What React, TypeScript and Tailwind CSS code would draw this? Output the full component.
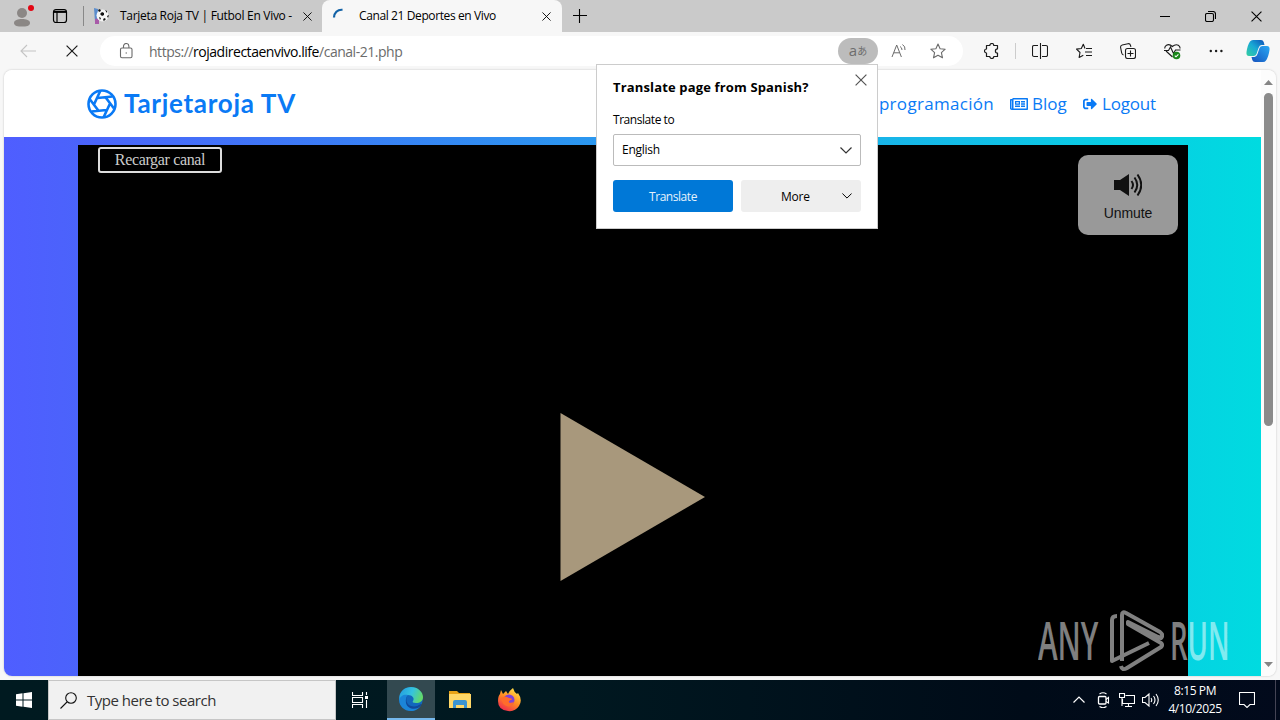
import React from "react";
import { FaSignOutAlt, FaRegNewspaper } from "react-icons/fa";

type IconProps = { className?: string; children: React.ReactNode; box?: string };

function Icon({ className = "", children, box = "0 0 16 16" }: IconProps) {
  return (
    <svg viewBox={box} className={`block shrink-0 ${className}`} fill="none" stroke="currentColor" strokeWidth="1.1">
      {children}
    </svg>
  );
}

function Cross({ className = "" }: { className?: string }) {
  return (
    <Icon className={className} box="0 0 10 10">
      <path d="M.5.5l9 9M9.5.5l-9 9" strokeWidth="1" />
    </Icon>
  );
}

function TabStrip() {
  return (
    <header className="flex h-8 shrink-0 items-center bg-[#cacaca] text-black">
      <Icon className="ml-[13px] h-[26px] w-[22px] text-[#8b8785]" box="0 0 22 26">
        <g fill="currentColor" stroke="none">
          <circle cx="9" cy="10" r="5" />
          <path d="M1 20c0-3 4-4 8-4s8 1 8 4-4 3.500-8 3.500-8-.5-8-3.500z" />
          <circle cx="18" cy="5" r="3" fill="#e30613" />
        </g>
      </Icon>
      <Icon className="ml-[17px] h-4 w-4" box="0 0 16 16">
        <rect x="1.500" y="1.500" width="13" height="13" rx="2.500" strokeWidth="1.200" />
        <path d="M2 3.800h12" strokeWidth="2.200" />
        <path d="M5 4v10" strokeWidth="1.200" />
      </Icon>
      <div className="ml-[15px] h-5 w-px bg-[#888]" />
      <div className="flex h-full w-[238px] items-center">
        <Icon className="ml-[10px] h-4 w-4" box="0 0 16 16">
          <g stroke="none">
            <path d="M0 0l4 1v14l-3-1z" fill="#5a8ccc" />
            <path d="M1 11l4-1v6H1z" fill="#a85aa8" />
            <circle cx="8.500" cy="7.500" r="6" fill="#f6f6f6" />
            <path d="M4 2l2-1 1 2-2 1zM8 4l2 1v2L8 8 6 6zM11 2l2 1v2zM13 8l2-1-1 3zM5 9l2 1-1 2zM10 10l2 1-2 2-1-1z" fill="#111" />
          </g>
        </Icon>
        <span className="ml-[10px] w-[180px] whitespace-nowrap text-[12px] tracking-[-0.3px]">
          Tarjeta Roja TV | Futbol En Vivo -
        </span>
        <Cross className="ml-[3px] h-[9px] w-[9px]" />
      </div>
      <div className="flex h-full w-60 items-center rounded-t-lg bg-[#f7f7f7]">
        <Icon className="ml-[9px] h-4 w-4 text-[#1262a6]" box="0 0 16 16">
          <path d="M3 9.500C3 5 6.500 1.300 11.500 1.800" strokeWidth="2.200" />
        </Icon>
        <span className="ml-[12px] w-[180px] whitespace-nowrap text-[12px] tracking-[-0.39px]">Canal 21 Deportes en Vivo</span>
        <Cross className="ml-[3px] h-[9px] w-[9px]" />
      </div>
      <Icon className="ml-[11px] h-[14px] w-[14px]" box="0 0 14 14">
        <path d="M6.500 0v14M0 6.500h14" />
      </Icon>
      <div className="ml-auto mr-[18px] flex items-center gap-[35px]">
        <div className="h-px w-[10px] bg-black" />
        <Icon className="h-[11px] w-[11px]" box="0 0 11 11">
          <rect x=".5" y="2.500" width="8" height="8" rx="1.500" />
          <path d="M3 .5h5q2.500 0 2.500 2.500v5" />
        </Icon>
        <Cross className="h-[11px] w-[11px]" />
      </div>
    </header>
  );
}

function Toolbar() {
  return (
    <div className="flex h-[38px] shrink-0 items-center bg-[#f7f7f7] text-[#1b1b1b]">
      <Icon className="ml-5 h-4 w-4 text-[#c4c4c4]">
        <path d="M16 8H1M7 2L1 8l6 6" />
      </Icon>
      <Cross className="ml-[30px] h-3 w-3" />
      <div className="ml-[22px] flex h-[30px] w-[863px] items-center rounded-full bg-white text-[#6b6b6b]">
        <Icon className="ml-[18px] h-4 w-4">
          <rect x="2.500" y="5" width="11.500" height="9.800" rx="1.500" />
          <path d="M5.500 5V3.200a2.700 2.700 0 0 1 5.400 0V5" />
          <circle cx="8.200" cy="10" r=".7" fill="currentColor" stroke="none" />
        </Icon>
        <span className="ml-[15px] w-[689px] whitespace-nowrap text-[14px] tracking-[-0.47px]">
          https://<span className="text-black">rojadirectaenvivo.life</span>/canal-21.php
        </span>
        <div className="flex h-[26px] w-10 items-center justify-center rounded-full bg-[#bcbcbc] text-[#6d6d6d]">
          <span className="-mt-[2px] text-[15px] leading-none">a</span>
          <span className="-mt-px font-['Noto_Sans_CJK_JP',sans-serif] text-[10px] leading-none">あ</span>
        </div>
        <Icon className="ml-[13px] h-4 w-4">
          <path d="M1 14L5.700 2l4.700 12M2.800 9.800h5.800M9 3.500q2 1 2 3.500M11.500 1.500q3 2 2.500 5.500" strokeWidth="1" />
        </Icon>
        <Icon className="ml-[23px] h-4 w-4">
          <path d="M8 1l2.100 4.700 5.100.5-3.800 3.500 1.100 5.100L8 12.200l-4.500 2.600 1.100-5.100L.8 6.200l5.100-.5z" strokeLinejoin="round" />
        </Icon>
      </div>
      <Icon className="ml-[21px] h-4 w-4">
        <path d="M2.500 2.500h3.300a2 2 0 0 1 4 0h3.700v3.300a2 2 0 0 0 0 4.200v3.500H9.800a2 2 0 0 1-4 0H2.500V10a2 2 0 1 1 0-4z" strokeWidth="1.200" strokeLinejoin="round" />
      </Icon>
      <div className="ml-[15px] h-4 w-px bg-[#ccc]" />
      <Icon className="ml-4 h-4 w-4" box="0 0 16 16">
        <path d="M6 2.500H2a1.500 1.500 0 0 0-1.500 1.500v8A1.500 1.500 0 0 0 2 13.500h4M10 2.500h4a1.500 1.500 0 0 1 1.500 1.500v8a1.500 1.500 0 0 1-1.500 1.500h-4M8.500 0v16" />
      </Icon>
      <Icon className="ml-7 h-4 w-4">
        <path d="M9 5.500L7.300 1.300 5.300 5.500l-4.800.6 3.500 3.400-.9 5 4.200-2.300M10 5.500h6M9 9h7M10 12.500h6" strokeLinejoin="round" />
      </Icon>
      <Icon className="ml-7 h-4 w-4">
        <rect x="5.500" y="5.500" width="10" height="10" rx="2" />
        <path d="M10.500 7.500v6M7.500 10.500h6M3.500 12Q2 11.500 1.700 10L.6 4.500Q.3 2.500 2.200 2L8 .7q2-.3 2.500 1.600l.4 1.500" />
      </Icon>
      <Icon className="ml-7 h-[17px] w-[17px]" box="0 0 17 17">
        <path d="M8.500 14L2 8M.8 5.500Q.5 3.500 2.500 2.200q3-1.500 5.800 1.300Q11.500.8 14.300 2.200q2 1.300 1.700 3.300M0 7.500h4.500l2-3.500 3 6.500L11.500 7h5" />
        <circle cx="12.500" cy="12.500" r="3.800" fill="#1a861a" stroke="none" />
        <path d="M10.800 12.600l1.200 1.200 2.400-2.500" stroke="#fff" />
      </Icon>
      <Icon className="ml-7 h-4 w-4">
        <g fill="currentColor" stroke="none">
          <circle cx="1.800" cy="8" r="1.200" />
          <circle cx="7.100" cy="8" r="1.200" />
          <circle cx="12.400" cy="8" r="1.200" />
        </g>
      </Icon>
      <Icon className="ml-[21px] h-6 w-6" box="0 0 24 24">
        <defs>
          <linearGradient id="copA" x1="0" y1="1" x2="1" y2="0">
            <stop offset="0" stopColor="#35cfa0" />
            <stop offset=".5" stopColor="#19a9d5" />
            <stop offset="1" stopColor="#0d4fb8" />
          </linearGradient>
          <linearGradient id="copB" x1="0" y1="1" x2="1" y2="0">
            <stop offset="0" stopColor="#1652bd" />
            <stop offset="1" stopColor="#28a8f4" />
          </linearGradient>
        </defs>
        <g stroke="none">
          <path d="M7 1h8q2 0 2.700 2l.8 3h-3q-2 0-3 3l-2 6q-.8 2-3 2H3q-3 0-2.500-4Q1.500 6 4 2.500 5 1 7 1z" fill="url(#copA)" />
          <path d="M17 23H9q-2 0-2.700-2l-.8-3h3q2 0 3-3l2-6q.8-2 3-2H21q3 0 2.500 4-1 7-3.500 10.500-1 1.500-3 1.500z" fill="url(#copB)" />
        </g>
      </Icon>
    </div>
  );
}

function SiteHeader() {
  return (
    <nav className="flex h-[67px] shrink-0 items-center bg-white text-[#0a7af5]">
      <Icon className="ml-[83px] h-[30px] w-[30px]" box="0 0 30 30">
        <g strokeWidth="2.600">
          <circle cx="15" cy="15" r="13.500" />
          <path d="M10.500 9L25.500 7.500M18.500 8.200L27 19.500M22.800 15L16.500 28.500M19.500 21L4.500 22.500M11.500 21.800L3 10.500M7.200 15L13.500 1.500" />
        </g>
      </Icon>
      <span className="ml-[7px] -mt-[2px] whitespace-nowrap font-['Lato',sans-serif] text-[26px] font-bold leading-none tracking-[0.7px]">Tarjetaroja TV</span>
      <div className="ml-auto mr-[105px] flex items-center whitespace-nowrap text-[17px] leading-none">
        <span className="-mt-px tracking-[0.3px]">programación</span>
        <FaRegNewspaper className="ml-4 h-[18px] w-[18px]" />
        <span className="-mt-px ml-1 w-[35px]">Blog</span>
        <FaSignOutAlt className="ml-4 h-[14px] w-[14px]" />
        <span className="-mt-px ml-[5px] w-[54px] tracking-[-0.2px]">Logout</span>
      </div>
    </nav>
  );
}

function Player() {
  return (
    <main className="flex flex-1 bg-[linear-gradient(90deg,#4f5eff_0%,#4b63fb_6%,#00dbe0_100%)] pl-[74px] pr-[73px] pt-2">
      <section className="flex flex-1 flex-col bg-black">
        <div className="flex items-start justify-between pl-5 pr-[10px]">
          <button className="mt-[2px] h-[26px] w-[124px] whitespace-nowrap rounded-[3px] border-2 border-[#ddd] bg-black font-['Liberation_Serif',serif] text-[16px] leading-none tracking-[-0.35px] text-[#ccc]">
            Recargar canal
          </button>
          <button className="mt-[10px] flex h-20 w-[100px] flex-col items-center rounded-[10px] bg-[#999] pt-[18px] text-[#111]">
            <Icon className="h-6 w-7" box="0 0 28 24">
              <path d="M0 7h6l9-6v22l-9-6H0z" fill="currentColor" stroke="none" />
              <path d="M17.500 8q3 4 0 8M20.500 4.500q5.500 7.500 0 15M23.500 1.500q7.500 10.500 0 21" strokeWidth="2" />
            </Icon>
            <span className="mt-[7px] font-['Liberation_Sans',sans-serif] text-[14px] leading-[18px] tracking-[-0.1px]">Unmute</span>
          </button>
        </div>
        <svg viewBox="0 0 145 168" className="ml-[482px] mt-[178px] h-[168px] w-[145px]">
          <path d="M.5 0L145 84 .5 168z" fill="#a8987c" />
        </svg>
      </section>
    </main>
  );
}

function ScrollBar() {
  return (
    <aside className="flex w-[15px] shrink-0 flex-col items-center bg-[#fcfcfc] pb-[9px] pt-[10px]">
      <svg viewBox="0 0 9 5" className="h-[5px] w-[9px]"><path d="M0 5L4.500 0 9 5z" fill="#858585" /></svg>
      <div className="mt-2 h-[333px] w-[9px] rounded-full bg-[#8b8b8b]" />
      <svg viewBox="0 0 9 5" className="mt-auto h-[5px] w-[9px]"><path d="M0 0L4.500 5 9 0z" fill="#858585" /></svg>
    </aside>
  );
}

function Chevron({ className = "" }: { className?: string }) {
  return (
    <Icon className={className} box="0 0 12 7">
      <path d="M.5.500L6 6 11.500.5" strokeWidth="1.200" />
    </Icon>
  );
}

function TranslatePopup() {
  return (
    <div className="absolute left-[596px] top-[64px] flex h-[165px] w-[282px] flex-col border border-[#ccc] bg-white px-4 text-[12px] text-black">
      <div className="flex h-[46px] items-start justify-between">
        <h2 className="mt-[13px] whitespace-nowrap text-[13px] font-bold leading-[18px] tracking-[0.15px]">Translate page from Spanish?</h2>
        <Cross className="-mr-[6px] mt-[9px] h-3 w-3 text-[#555]" />
      </div>
      <label className="leading-[18px] tracking-[-0.45px]">Translate to</label>
      <div className="mt-[5px] flex h-8 shrink-0 items-center justify-between rounded-[2px] border border-[#bbb] px-2 tracking-[-0.25px]">
        English
        <Chevron className="h-[7px] w-3 text-[#333]" />
      </div>
      <div className="mt-[14px] flex gap-2">
        <button className="h-8 w-[120px] rounded-[3px] bg-[#0078d7] pt-px tracking-[-0.45px] text-[#e5f2fc]">Translate</button>
        <button className="flex h-8 w-[120px] items-center rounded-[3px] bg-[#eee] pl-10 tracking-[-0.25px]">
          <span className="w-[61px] pt-px text-left">More</span>
          <Chevron className="h-[6px] w-[10px]" />
        </button>
      </div>
    </div>
  );
}

function Watermark() {
  return (
    <div className="pointer-events-none absolute left-[1038px] top-[609px] flex h-[64px] w-[196px] items-center text-white/50">
      <div className="w-[64px]">
        <span className="-mt-[2px] block w-max origin-left scale-x-[0.57] text-[52px] font-semibold leading-none">ANY</span>
      </div>
      <svg viewBox="0 0 54 64" className="ml-[8px] h-16 w-[54px] shrink-0" fill="none" stroke="currentColor" strokeWidth="4" strokeLinejoin="round">
        <path d="M7 7Q2 7 2 11v41L39 34M12 52V6q0-4 4-2l34 19q4 3 1 6l-3-1L18 13v2l33 19q2 2 0 4L17 59q-5 3-6-2" />
      </svg>
      <div className="ml-[6px] w-[62px]">
        <span className="-mt-[2px] block w-max origin-left scale-x-[0.53] text-[52px] font-semibold leading-none">RUN</span>
      </div>
    </div>
  );
}

function Taskbar() {
  return (
    <footer className="flex h-10 shrink-0 items-center bg-[linear-gradient(90deg,#001a20_0%,#001820_45%,#000b18_80%,#020a1c_100%)] text-white">
      <div className="flex w-12 justify-center">
        <svg viewBox="0 0 16 16" className="h-4 w-4" fill="currentColor"><path d="M0 2.200L6.500 1.300v6.200H0zM7.500 1.200L16 0v7.500H7.500zM0 8.500h6.500v6.200L0 13.800zM7.500 8.500H16V16l-8.500-1.200z" /></svg>
      </div>
      <div className="flex h-10 w-72 items-center border border-[#c6c6c6] bg-[#f1f1f1] text-[#333]">
        <Icon className="ml-[11px] h-[17px] w-[17px] text-[#111]" box="0 0 17 17">
          <circle cx="11" cy="6" r="5.300" />
          <path d="M7 10L.5 16.500" />
        </Icon>
        <span className="ml-[10px] whitespace-nowrap text-[15px] tracking-[-0.48px]">Type here to search</span>
      </div>
      <Icon className="ml-4 h-4 w-4" box="0 0 16 16">
        <path d="M.5 0v3.500h10V0M.5 16v-3.500h10V16M.5 5.500h10v5H.5zM14.500 0v3M14.500 8v8" />
        <path d="M13 4h3v3h-3z" fill="currentColor" stroke="none" />
      </Icon>
      <div className="ml-[19px] flex h-10 w-12 items-center justify-center border-b-2 border-[#76b9ed] bg-[#334950]">
        <svg viewBox="0 0 24 24" className="h-6 w-6">
          <defs>
            <linearGradient id="edgeTop" x1="0" y1=".3" x2="1" y2=".6">
              <stop offset="0" stopColor="#249fe0" />
              <stop offset=".5" stopColor="#35c3df" />
              <stop offset="1" stopColor="#66db61" />
            </linearGradient>
          </defs>
          <circle cx="12" cy="12" r="11.800" fill="#1268bd" />
          <path d="M20 18l5-1v8h-9z" fill="#334950" />
          <path d="M.3 10C1 4 6 0 12 0c7 0 12 5 12 10 0 4-3 6-7 6-3 0-4-1-3-2 2-3-1-6-5-6C5 8 2 10 .3 14z" fill="url(#edgeTop)" />
          <path d="M.2 13C1 9 5 7 9 8c-3 2-3 9 2 12 4 2 8 0 11-2-2 4-6 6-10 6C5 24 0 19 .2 13z" fill="#1b85d8" />
          <path d="M9 8.500c-3 3-2 9 3 10.500 4 1 7 0 10-2 1 1-1 3-3 4-5 2-11 0-12-5-.5-3 0-6 2-7.500z" fill="#10499b" />
        </svg>
      </div>
      <svg viewBox="0 0 22 18" className="ml-[14px] h-[18px] w-[22px]">
        <path d="M0 0h8l2 2h11v15H0z" fill="#e8a317" />
        <path d="M0 3h22v14H0z" fill="#ffd767" />
        <path d="M4 17v-6q0-2 2-2h10q2 0 2 2v6h-3v-3H7v3z" fill="#3c94d0" />
      </svg>
      <svg viewBox="0 0 24 24" className="ml-[26px] h-6 w-6">
        <defs>
          <linearGradient id="fox" x1=".8" y1="0" x2=".2" y2="1">
            <stop offset="0" stopColor="#ffe64a" />
            <stop offset=".5" stopColor="#ff8b22" />
            <stop offset="1" stopColor="#ef2452" />
          </linearGradient>
        </defs>
        <path d="M4 2l2 4 3-3 2 3q2-4 5-6 1 4 4 6l1-1q5 7 1 13-4 6-11 5Q1 22 1 13 1 8 3 6z" fill="url(#fox)" />
        <circle cx="12" cy="12" r="5.500" fill="#7d42d9" />
        <path d="M4 10q4-3 8 0 3 0 3 1.500-4 1-3 3 3 1 5-1-1 5-6 5-6-1-7-8.500z" fill="#ff6c2b" />
      </svg>
      <div className="ml-auto flex items-center">
        <Icon className="h-3 w-3" box="0 0 12 12"><path d="M.5 8.500L6 3l5.500 5.500" strokeWidth="1.200" /></Icon>
        <Icon className="ml-3 h-4 w-[14px]" box="0 0 14 16">
          <rect x="1.500" y="4.500" width="7.500" height="7.500" rx="1" strokeWidth="1.300" />
          <path d="M9 7.500L11.500 5.500v5.500L9 9.500M2.500 2q3.500-2.500 7 0M2.500 14.500q3.500 2.500 7 0" />
        </Icon>
        <Icon className="ml-[8px] h-4 w-4">
          <path d="M6.500 3.500h9v8H3.500V7M6 14.500h7M9.500 11.500v3M.5 1.500h5v4h-5zM3 5.500V14" />
        </Icon>
        <Icon className="ml-[7px] h-4 w-[17px]" box="0 0 17 16">
          <path d="M.5 5.500H3L7 2v12L3 10.500H.5zM9 6q1.500 2 0 4M11.500 4q3 4 0 8M14 2q4.500 6 0 12" />
        </Icon>
        <div className="ml-[6px] w-[60px] whitespace-nowrap text-center text-[12px] leading-[18px] tracking-[-0.4px]">
          <div>8:15 PM</div>
          <div>4/10/2025</div>
        </div>
        <Icon className="ml-[14px] h-4 w-4" box="0 0 16 16">
          <path d="M.5.500h15v12H11L8 15.500l-3-3H.5z" />
        </Icon>
        <div className="ml-5 h-10 w-px bg-[#445]" />
        <div className="w-[4px]" />
      </div>
    </footer>
  );
}

export default function App() {
  return (
    <div className="relative flex h-[720px] w-[1280px] flex-col overflow-hidden bg-[#f7f7f7] font-['Open_Sans',sans-serif]">
      <TabStrip />
      <Toolbar />
      <div className="mx-1 mb-1 flex flex-1 overflow-hidden rounded-lg shadow-[0_0_2px_#bbb]">
        <div className="flex flex-1 flex-col">
          <SiteHeader />
          <Player />
        </div>
        <ScrollBar />
      </div>
      <Taskbar />
      <TranslatePopup />
      <Watermark />
    </div>
  );
}
